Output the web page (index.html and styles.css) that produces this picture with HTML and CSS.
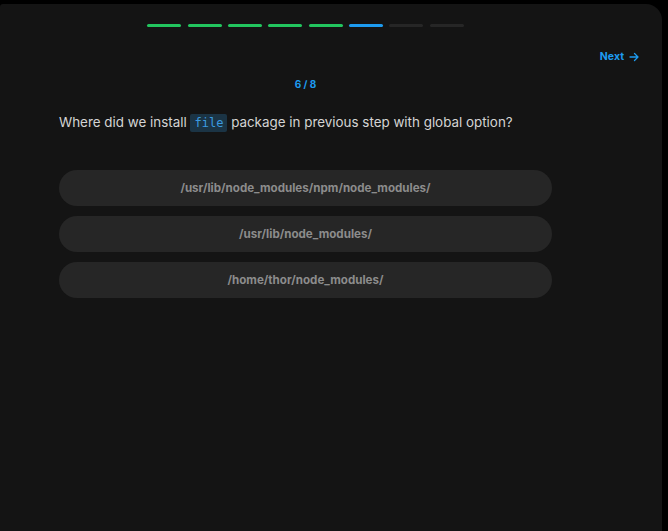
FILE: index.html
```html
<!DOCTYPE html>
<html lang="en">
<head>
<meta charset="utf-8">
<title>Quiz</title>
<link rel="stylesheet" href="styles.css">
</head>
<body>
<div class="panel">
  <div class="column">
    <div class="progress">
      <span class="seg done"></span>
      <span class="seg done"></span>
      <span class="seg done"></span>
      <span class="seg done"></span>
      <span class="seg done"></span>
      <span class="seg current"></span>
      <span class="seg"></span>
      <span class="seg"></span>
    </div>
  </div>
  <div class="nav">
    <a class="next" href="#">Next
      <svg width="12" height="12" viewBox="0 0 24 24" fill="none" stroke="currentColor" stroke-width="2.6" stroke-linecap="round" stroke-linejoin="round"><path d="M4 12h16M13 5l7 7-7 7"/></svg>
    </a>
  </div>
  <div class="column">
    <div class="counter">6 / 8</div>
    <p class="question">Where did we install <code>file</code> package in previous step with global option?</p>
    <div class="options">
      <button class="option">/usr/lib/node_modules/npm/node_modules/</button>
      <button class="option">/usr/lib/node_modules/</button>
      <button class="option">/home/thor/node_modules/</button>
    </div>
  </div>
</div>
</body>
</html>
```
FILE: styles.css
```css
html, body {
  margin: 0;
  padding: 0;
  background: #000;
  height: 100%;
}
body {
  padding-top: 4px;
  box-sizing: border-box;
  font-family: Inter, "Noto Sans", sans-serif;
}
.panel {
  width: 662px;
  height: 527px;
  background: #141414;
  border-top-right-radius: 16px;
  border-top-left-radius: 3px;
  box-sizing: border-box;
  padding: 20px 0 0 59px;
}
.column {
  width: 493px;
}
.progress {
  display: flex;
  justify-content: center;
  gap: 6.4px;
}
.seg {
  width: 34px;
  height: 3px;
  border-radius: 2px;
  background: #262626;
}
.seg.done { background: #22c55e; }
.seg.current { background: #1d9bf0; }
.nav {
  display: flex;
  justify-content: flex-end;
  padding-right: 22px;
  margin-top: 23px;
}
.next {
  display: flex;
  align-items: center;
  gap: 4px;
  color: #1d9bf0;
  font-size: 10.5px;
  font-weight: 700;
  text-decoration: none;
}
.counter {
  margin-top: 15px;
  text-align: center;
  color: #1d9bf0;
  font-size: 10px;
  font-weight: 700;
}
.question {
  margin: 22px 0 0;
  color: #d4d4d4;
  font-size: 13.4px;
  line-height: 20px;
}
code {
  font-family: "DejaVu Sans Mono", monospace;
  font-size: 12px;
  color: #3b9be0;
  background: #1b3445;
  padding: 2px 4px;
  border-radius: 2px;
}
.options {
  display: flex;
  flex-direction: column;
  gap: 10px;
  margin-top: 37px;
}
.option {
  height: 36px;
  border: 0;
  border-radius: 18px;
  background: #262626;
  color: #8c8c8c;
  font-family: Inter, "Noto Sans", sans-serif;
  font-size: 11.6px;
  font-weight: 700;
}
```
